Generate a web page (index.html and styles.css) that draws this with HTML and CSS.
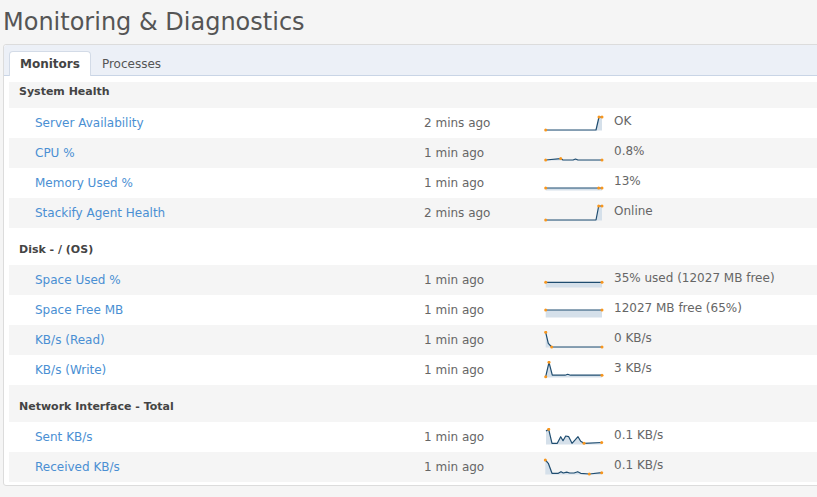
FILE: index.html
```html
<!DOCTYPE html>
<html lang="en">
<head>
<meta charset="utf-8">
<title>Monitoring &amp; Diagnostics</title>
<link rel="stylesheet" href="styles.css">
</head>
<body>
<h1 class="page-title">Monitoring &amp; Diagnostics</h1>
<div class="panel">
  <div class="tabs">
    <div class="tab active">Monitors</div>
    <div class="tab">Processes</div>
  </div>
  <div class="tab-body">
    <div class="group-head first">System Health</div>
    <div class="row">
      <a class="name" href="#">Server Availability</a>
      <span class="time">2 mins ago</span>
      <svg class="spark" viewBox="0 0 62 18" width="62" height="18">
        <path class="area" d="M2.7 16 L53 16 L56 3 L59 3 L59 16.5 L2.7 16.5 Z"/>
        <path class="line" d="M2.7 16 L53 16 L56 3 L59 3"/>
        <circle cx="2.7" cy="16" r="1.5"/><circle cx="56" cy="3" r="1.5"/><circle cx="59" cy="3" r="1.5"/>
      </svg>
      <span class="value">OK</span>
    </div>
    <div class="row">
      <a class="name" href="#">CPU %</a>
      <span class="time">1 min ago</span>
      <svg class="spark" viewBox="0 0 62 18" width="62" height="18">
        <path class="area" d="M2.7 16 L17.7 14.6 L20 16 L30 16 L32.5 15 L35 16 L59 16 L59 16.5 L2.7 16.5 Z"/>
        <path class="line" d="M2.7 16 L17.7 14.6 L20 16 L30 16 L32.5 15 L35 16 L59 16"/>
        <circle cx="2.7" cy="16" r="1.5"/><circle cx="17.7" cy="14.6" r="1.5"/><circle cx="59" cy="16" r="1.5"/>
      </svg>
      <span class="value">0.8%</span>
    </div>
    <div class="row">
      <a class="name" href="#">Memory Used %</a>
      <span class="time">1 min ago</span>
      <svg class="spark" viewBox="0 0 62 18" width="62" height="18">
        <path class="area" d="M2.7 14 L59 14 L59 16.5 L2.7 16.5 Z"/>
        <path class="line" d="M2.7 14 L59 14"/>
        <circle cx="2.7" cy="14" r="1.5"/><circle cx="55.7" cy="14" r="1.5"/><circle cx="59" cy="14" r="1.5"/>
      </svg>
      <span class="value">13%</span>
    </div>
    <div class="row">
      <a class="name" href="#">Stackify Agent Health</a>
      <span class="time">2 mins ago</span>
      <svg class="spark" viewBox="0 0 62 18" width="62" height="18">
        <path class="area" d="M2.7 16 L53 16 L55.7 2 L59 2 L59 16.5 L2.7 16.5 Z"/>
        <path class="line" d="M2.7 16 L53 16 L55.7 2 L59 2"/>
        <circle cx="2.7" cy="16" r="1.5"/><circle cx="55.7" cy="2" r="1.5"/><circle cx="59" cy="2" r="1.5"/>
      </svg>
      <span class="value">Online</span>
    </div>

    <div class="group-head">Disk - / (OS)</div>
    <div class="row">
      <a class="name" href="#">Space Used %</a>
      <span class="time">1 min ago</span>
      <svg class="spark" viewBox="0 0 62 18" width="62" height="18">
        <path class="area" d="M2.7 11.3 L59 11.3 L59 16.5 L2.7 16.5 Z"/>
        <path class="line" d="M2.7 11.3 L59 11.3"/>
        <circle cx="2.7" cy="11.3" r="1.5"/><circle cx="59" cy="11.3" r="1.5"/>
      </svg>
      <span class="value">35% used (12027 MB free)</span>
    </div>
    <div class="row">
      <a class="name" href="#">Space Free MB</a>
      <span class="time">1 min ago</span>
      <svg class="spark" viewBox="0 0 62 18" width="62" height="18">
        <path class="area" d="M2.7 9 L59 9 L59 16.5 L2.7 16.5 Z"/>
        <path class="line" d="M2.7 9 L59 9"/>
        <circle cx="2.7" cy="9" r="1.5"/><circle cx="59" cy="9" r="1.5"/>
      </svg>
      <span class="value">12027 MB free (65%)</span>
    </div>
    <div class="row">
      <a class="name" href="#">KB/s (Read)</a>
      <span class="time">1 min ago</span>
      <svg class="spark" viewBox="0 0 62 18" width="62" height="18">
        <path class="area" d="M2.7 1.3 L5.3 12.3 L8.7 16 L59 16 L59 16.5 L2.7 16.5 Z"/>
        <path class="line" d="M2.7 1.3 L5.3 12.3 L8.7 16 L59 16"/>
        <circle cx="2.7" cy="1.3" r="1.5"/><circle cx="8.7" cy="16" r="1.5"/><circle cx="59" cy="16" r="1.5"/>
      </svg>
      <span class="value">0 KB/s</span>
    </div>
    <div class="row">
      <a class="name" href="#">KB/s (Write)</a>
      <span class="time">1 min ago</span>
      <svg class="spark" viewBox="0 0 62 18" width="62" height="18">
        <path class="area" d="M2.7 15.7 L6 1.3 L9.3 14.2 L22 14.2 L24.7 13.3 L27.5 14.2 L59 14.2 L59 16.5 L2.7 16.5 Z"/>
        <path class="line" d="M2.7 15.7 L6 1.3 L9.3 14.2 L22 14.2 L24.7 13.3 L27.5 14.2 L59 14.2"/>
        <circle cx="2.7" cy="15.7" r="1.5"/><circle cx="6" cy="1.3" r="1.5"/><circle cx="59" cy="14.2" r="1.5"/>
      </svg>
      <span class="value">3 KB/s</span>
    </div>

    <div class="group-head">Network Interface - Total</div>
    <div class="row">
      <a class="name" href="#">Sent KB/s</a>
      <span class="time">1 min ago</span>
      <svg class="spark" viewBox="0 0 62 18" width="62" height="18">
        <path class="area" d="M3 3 L5.7 1.3 L9 15.3 L14.3 15.3 L17.7 8.7 L20 12.7 L22.7 8 L25.7 8.7 L29 15.3 L35 8.7 L37.7 13.3 L41 15.3 L58.7 14.5 L58.7 16.5 L3 16.5 Z"/>
        <path class="line" d="M3 3 L5.7 1.3 L9 15.3 L14.3 15.3 L17.7 8.7 L20 12.7 L22.7 8 L25.7 8.7 L29 15.3 L35 8.7 L37.7 13.3 L41 15.3 L58.7 14.5"/>
        <circle cx="5.7" cy="1.3" r="1.5"/><circle cx="41" cy="15.3" r="1.5"/><circle cx="58.7" cy="14.5" r="1.5"/>
      </svg>
      <span class="value">0.1 KB/s</span>
    </div>
    <div class="row">
      <a class="name" href="#">Received KB/s</a>
      <span class="time">1 min ago</span>
      <svg class="spark" viewBox="0 0 62 18" width="62" height="18">
        <path class="area" d="M2.3 2 L5.3 5.3 L9 15.3 L15.3 15.3 L18 13.7 L20.3 15 L23.7 14.2 L26.7 15 L31 15 L34.7 13.7 L37.7 15.3 L46.3 16 L58.7 14.7 L58.7 16.5 L2.3 16.5 Z"/>
        <path class="line" d="M2.3 2 L5.3 5.3 L9 15.3 L15.3 15.3 L18 13.7 L20.3 15 L23.7 14.2 L26.7 15 L31 15 L34.7 13.7 L37.7 15.3 L46.3 16 L58.7 14.7"/>
        <circle cx="2.3" cy="2" r="1.5"/><circle cx="46.3" cy="16" r="1.5"/><circle cx="58.7" cy="14.7" r="1.5"/>
      </svg>
      <span class="value">0.1 KB/s</span>
    </div>
  </div>
</div>
</body>
</html>
```
FILE: styles.css
```css
html, body {
  margin: 0;
  padding: 0;
  overflow: hidden;
  background: #f5f5f5;
}

body {
  font-family: "DejaVu Sans", Verdana, sans-serif;
  color: #555;
  padding-left: 3px;
}

.page-title {
  margin: 8px 0 8px 0;
  font-size: 24px;
  font-weight: normal;
  line-height: 28px;
  color: #555;
}

.panel {
  margin-right: -30px;
  background: #fff;
  border: 1px solid #dcdcdc;
  border-radius: 3px;
}

.tabs {
  display: flex;
  padding: 6px 0 0 5px;
  background: #ecf0f7;
  border-bottom: 1px solid #c9d5e6;
  border-radius: 3px 3px 0 0;
}

.tab {
  font-size: 12px;
  line-height: 22px;
  padding: 1px 10px 1px;
  margin-bottom: -1px;
  border: 1px solid transparent;
  border-bottom: 0;
  border-radius: 4px 4px 0 0;
  color: #555;
}

.tab.active {
  background: #fff;
  border-color: #d3dbe7;
  font-weight: bold;
  color: #444;
}

.tab-body {
  padding: 6px 5px 3px 5px;
}

.tab-body > :nth-child(odd) {
  background: #f5f5f5;
}

.group-head {
  font-size: 11px;
  font-weight: bold;
  line-height: 14px;
  color: #444;
  padding: 15px 10px 8px;
}

.group-head.first {
  padding-top: 3px;
  padding-bottom: 9px;
}

.row {
  display: grid;
  grid-template-columns: 415px 119px 71px 1fr;
  align-items: center;
  height: 30px;
  font-size: 12px;
}

.name {
  padding-left: 26px;
  color: #4a8fd3;
  text-decoration: none;
  line-height: 30px;
}

.time {
  color: #666;
  line-height: 30px;
}

.spark {
  display: block;
}

.spark .area {
  fill: #d5e0ea;
  stroke: none;
}

.spark .line {
  fill: none;
  stroke: #1f4d70;
  stroke-width: 1.2;
  stroke-linejoin: round;
}

.spark circle {
  fill: #f7961e;
}

.value {
  color: #666;
  line-height: 14px;
  margin-bottom: 4px;
  white-space: nowrap;
}
```
